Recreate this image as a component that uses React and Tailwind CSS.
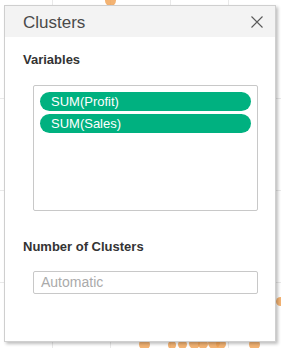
import React from "react";

const dots = [
  { x: 105, y: -5, s: 11 },
  { x: 139, y: 339, s: 11 },
  { x: 168, y: 341, s: 8 },
  { x: 178, y: 340, s: 9 },
  { x: 189, y: 338, s: 11 },
  { x: 198, y: 339, s: 10 },
  { x: 208, y: 337, s: 12 },
  { x: 216, y: 339, s: 10 },
  { x: 249, y: 339, s: 11 },
  { x: 276, y: 297, s: 9 },
];

export default function App() {
  return (
    <div
      className="relative w-[281px] h-[348px] overflow-hidden bg-white"
      style={{ fontFamily: '"Liberation Sans", Arial, sans-serif' }}
    >
      {/* background chart */}
      <div className="absolute inset-0">
        {[52, 110, 170, 228].map((x) => (
          <div key={x} className="absolute top-0 bottom-0 w-px bg-[#e9e9e9]" style={{ left: x }} />
        ))}
        {[98, 190, 282].map((y) => (
          <div key={y} className="absolute left-0 right-0 h-px bg-[#e9e9e9]" style={{ top: y }} />
        ))}
        {dots.map((d, i) => (
          <div
            key={i}
            className="absolute rounded-full bg-[#f0a050] opacity-80"
            style={{ left: d.x, top: d.y, width: d.s, height: d.s }}
          />
        ))}
      </div>

      {/* dialog */}
      <div className="absolute left-[4px] top-[5px] w-[272px] h-[337px] bg-white border border-[#cfcfcf] shadow-[2px_2px_3px_rgba(0,0,0,0.25)] flex flex-col">
        <div className="h-[31px] bg-[#f3f3f3] flex items-center justify-between pl-[18px] pr-[12px]">
          <span className="text-[17px] text-[#4a4a4a] leading-none mt-[1px]">Clusters</span>
          <svg width="12" height="12" viewBox="0 0 12 12" className="mt-[1px]">
            <path d="M0.5 0.5 L11.5 11.5 M11.5 0.5 L0.5 11.5" stroke="#5a5a5a" strokeWidth="1.1" fill="none" />
          </svg>
        </div>
        <div className="flex flex-col pl-[18px] pr-[17px]">
          <div className="mt-[15px] text-[13px] font-bold text-[#333] leading-[16px]">Variables</div>
          <div className="mt-[17px] ml-[10px] h-[126px] border border-[#c8c8c8] rounded-[2px] px-[6px] pt-[6px] flex flex-col gap-[3px]">
            <div className="h-[19px] rounded-full bg-[#00b180] text-white text-[13px] leading-[19px] pl-[11px]">SUM(Profit)</div>
            <div className="h-[19px] rounded-full bg-[#00b180] text-white text-[13px] leading-[19px] pl-[11px]">SUM(Sales)</div>
          </div>
          <div className="mt-[28px] text-[13px] font-bold text-[#333] leading-[16px]">Number of Clusters</div>
          <div className="mt-[16px] ml-[10px] h-[23px] border border-[#c8c8c8] rounded-[2px] flex items-center pl-[7px] text-[14px] text-[#aaa]">
            Automatic
          </div>
        </div>
      </div>
    </div>
  );
}
